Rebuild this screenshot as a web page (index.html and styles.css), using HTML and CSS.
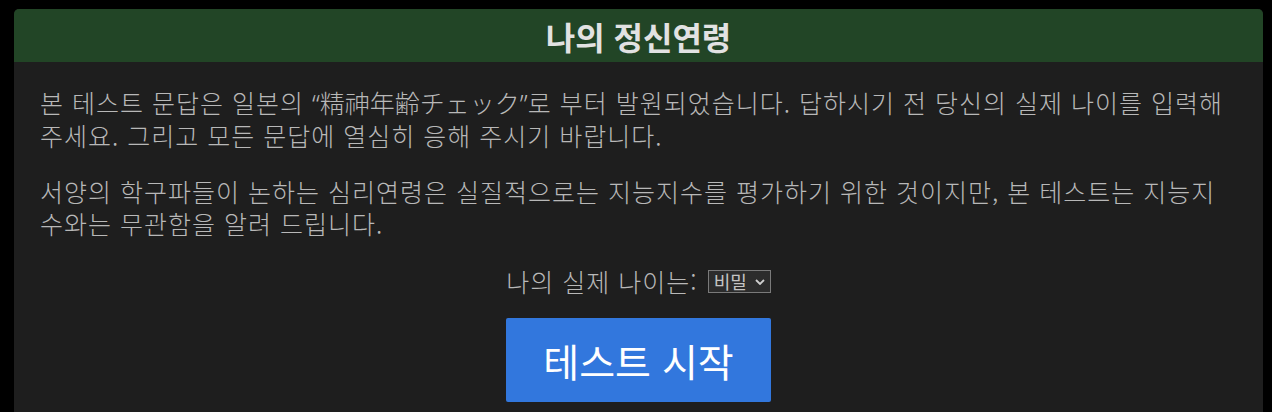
FILE: index.html
```html
<!DOCTYPE html>
<html lang="ko">
<head>
<meta charset="utf-8">
<title>나의 정신연령</title>
<link rel="stylesheet" href="styles.css">
</head>
<body>
<div class="page">
  <section class="card">
    <header class="card-head">
      <h1 class="card-title">나의 정신연령</h1>
    </header>
    <div class="card-body">
      <p class="intro">본 테스트 문답은 일본의 <q class="origin">精神年齢チェック</q>로 부터 발원되었습니다. 답하시기 전 당신의 실제 나이를 입력해 주세요. 그리고 모든 문답에 열심히 응해 주시기 바랍니다.</p>
      <p class="intro">서양의 학구파들이 논하는 심리연령은 실질적으로는 지능지수를 평가하기 위한 것이지만, 본 테스트는 지능지수와는 무관함을 알려 드립니다.</p>
      <div class="age-row">
        <label class="age-label" for="age">나의 실제 나이는:</label>
        <div class="age-select">
          <select id="age" class="age-input">
            <option>비밀</option>
          </select>
          <svg class="age-caret" viewBox="0 0 10 6" width="10" height="6" aria-hidden="true"><path d="M1 1l4 4 4-4" fill="none" stroke="currentColor" stroke-width="1.8"/></svg>
        </div>
      </div>
      <div class="start-row">
        <button class="start-btn" type="button">테스트 시작</button>
      </div>
    </div>
  </section>
</div>
</body>
</html>
```

FILE: styles.css
```css
html, body {
  margin: 0;
  background: #000;
}

body {
  font-family: "Noto Sans CJK KR", "Noto Sans", sans-serif;
}

.page {
  padding: 9px 9px 0 14px;
}

.card {
  background: #1e1e1e;
  border-radius: 5px 5px 0 0;
  overflow: hidden;
}

.card-head {
  background: #224526;
  height: 53px;
  display: flex;
  align-items: center;
  justify-content: center;
}

.card-title {
  margin: 0;
  font-size: 32px;
  font-weight: 700;
  color: #e2e2e2;
  line-height: 1;
}

.card-body {
  padding: 24px 26px 10px;
}

.intro {
  margin: 0 0 24px;
  font-size: 25px;
  font-weight: 300;
  letter-spacing: 1px;
  line-height: 32px;
  color: #b8b8b8;
}

/* Japanese title, narrow Latin quote marks around it */
.origin {
  quotes: "\201C" "\201D";
  letter-spacing: 0;
  font-family: "Noto Sans CJK JP", "Noto Sans CJK KR", sans-serif;
}

.origin::before,
.origin::after {
  font-family: "Noto Sans", sans-serif;
}

.age-row {
  display: flex;
  justify-content: center;
  align-items: center;
  gap: 10px;
  margin-top: 26px;
}

.age-label {
  font-size: 25px;
  font-weight: 300;
  letter-spacing: 1px;
  color: #b8b8b8;
  line-height: 32px;
}

.age-select {
  position: relative;
  display: flex;
}

.age-input {
  appearance: none;
  -webkit-appearance: none;
  background: #2c2c2c;
  border: 1px solid #7a7a7a;
  color: #c4c4c4;
  font-family: inherit;
  font-size: 18px;
  line-height: 20px;
  height: 23px;
  width: 63px;
  padding: 0 22px 0 5px;
  border-radius: 0;
  margin: 0;
}

.age-caret {
  position: absolute;
  right: 6px;
  top: 9px;
  color: #cfcfcf;
  pointer-events: none;
}

.start-row {
  display: flex;
  justify-content: center;
  margin-top: 21px;
}

.start-btn {
  width: 265px;
  height: 84px;
  border: 0;
  border-radius: 2px;
  background: #3277dd;
  color: #fff;
  font-family: inherit;
  font-size: 39px;
  cursor: pointer;
}
```
